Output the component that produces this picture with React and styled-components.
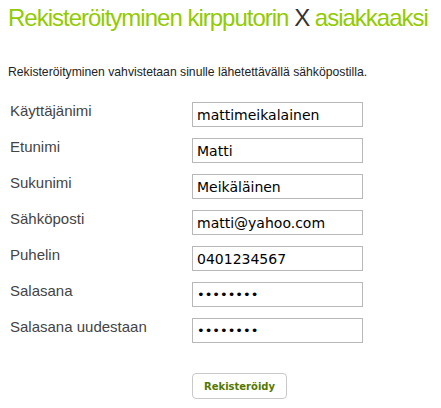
import React from "react";
import styled, { createGlobalStyle } from "styled-components";

const GlobalStyle = createGlobalStyle`
  body {
    margin: 0;
    background: #fff;
    font-family: "Liberation Sans", Arial, sans-serif;
  }
`;

const Page = styled.div`
  padding: 4px 8px 0 8px;
`;

const Title = styled.h1`
  margin: 0;
  font-size: 24px;
  font-weight: normal;
  letter-spacing: -1px;
  line-height: 28px;
  white-space: nowrap;
  color: #92cb00;
`;

const Mark = styled.span`
  color: #333;
`;

const Intro = styled.p`
  margin: 33px 0 0 0;
  font-size: 12.2px;
  line-height: 14px;
  color: #222;
`;

const Form = styled.form`
  margin-top: 23px;
  display: grid;
  grid-template-columns: 182px 171px;
  row-gap: 11px;
  padding-left: 2px;
`;

const Label = styled.label`
  font-size: 15px;
  line-height: 18px;
  color: #444;
`;

const Field = styled.input`
  box-sizing: border-box;
  width: 171px;
  height: 25px;
  margin: 0;
  padding: 0 4px;
  border: 1px solid #b8b8b8;
  border-radius: 0;
  font-family: "DejaVu Sans", sans-serif;
  font-size: ${(p) => (p.type === "password" ? "13px" : "14px")};
  color: #000;
  outline: none;
`;

const Actions = styled.div`
  padding-left: 184px;
  margin-top: 30px;
`;

const Button = styled.button`
  box-sizing: border-box;
  width: 95px;
  height: 26px;
  background: #fff;
  border: 1px solid #c8c8c8;
  border-radius: 4px;
  font-family: "DejaVu Sans", sans-serif;
  font-weight: bold;
  font-size: 10px;
  color: #557800;
  cursor: pointer;
`;

const fields = [
  { label: "Käyttäjänimi", value: "mattimeikalainen" },
  { label: "Etunimi", value: "Matti" },
  { label: "Sukunimi", value: "Meikäläinen" },
  { label: "Sähköposti", value: "matti@yahoo.com" },
  { label: "Puhelin", value: "0401234567" },
  { label: "Salasana", value: "salasana", type: "password" },
  { label: "Salasana uudestaan", value: "salasana", type: "password" },
];

export default function App() {
  return (
    <>
      <GlobalStyle />
      <Page>
        <Title>
          Rekisteröityminen kirpputorin <Mark>X</Mark> asiakkaaksi
        </Title>
        <Intro>Rekisteröityminen vahvistetaan sinulle lähetettävällä sähköpostilla.</Intro>
        <Form onSubmit={(e) => e.preventDefault()}>
          {fields.map((f, i) => (
            <React.Fragment key={f.label}>
              <Label htmlFor={"f" + i}>{f.label}</Label>
              <Field id={"f" + i} type={f.type || "text"} defaultValue={f.value} />
            </React.Fragment>
          ))}
        </Form>
        <Actions>
          <Button type="button">Rekisteröidy</Button>
        </Actions>
      </Page>
    </>
  );
}
